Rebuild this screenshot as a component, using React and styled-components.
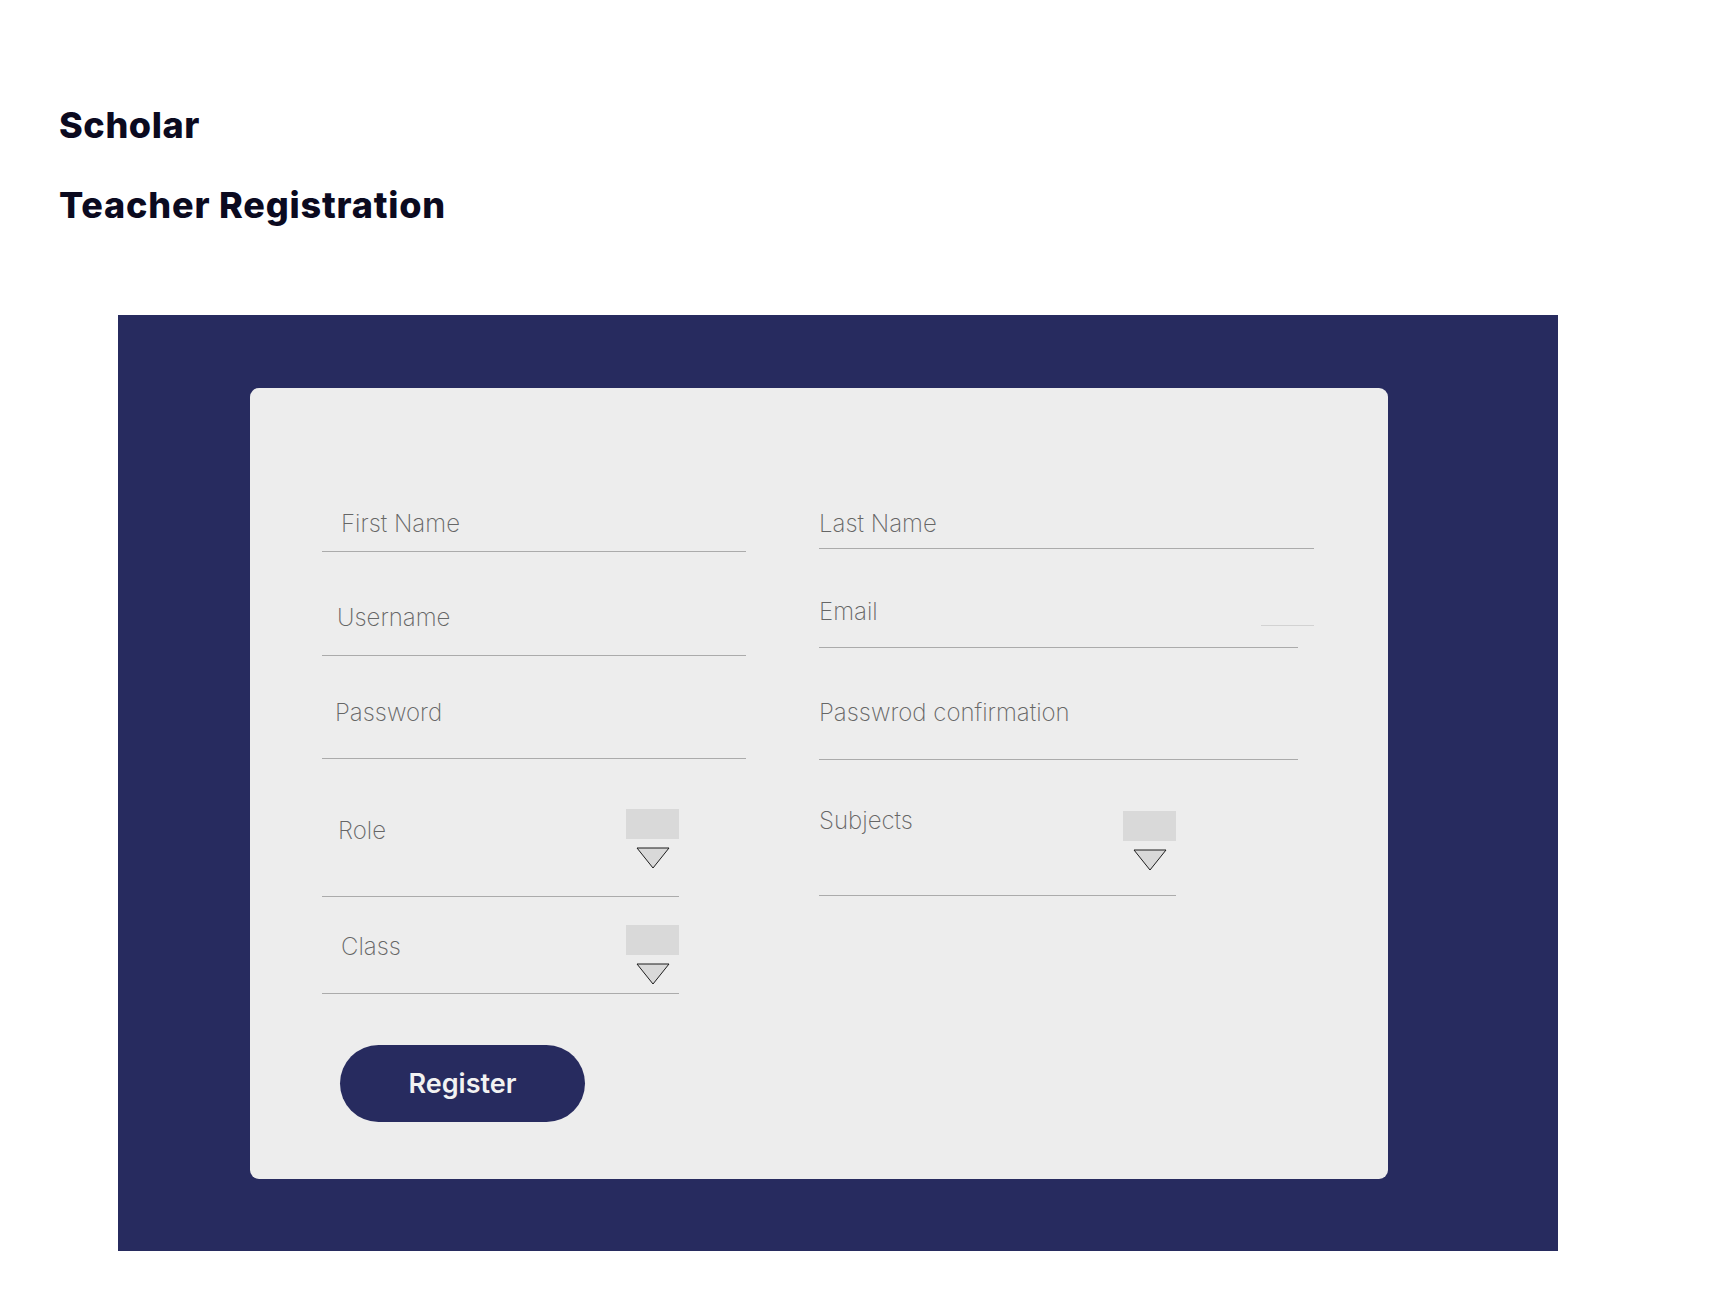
import React from "react";
import styled, { createGlobalStyle } from "styled-components";

const GlobalStyle = createGlobalStyle`
  html, body {
    margin: 0;
    background: #ffffff;
  }
  * {
    box-sizing: border-box;
  }
`;

function Arrow() {
  return (
    <svg width="34" height="22" viewBox="0 0 34 22">
      <polygon
        points="1,1 33,1 17,21"
        fill="#d9d9d9"
        stroke="#1d1d1d"
        strokeWidth="1"
        strokeLinejoin="miter"
      />
    </svg>
  );
}

function Dropdown({ label, width, height, pad, indent, boxTop }) {
  return (
    <SelectField width={width} height={height}>
      <Label pad={pad} indent={indent}>{label}</Label>
      <Picker top={boxTop}>
        <PickBox />
        <Arrow />
      </Picker>
    </SelectField>
  );
}

function App() {
  return (
    <>
      <GlobalStyle />
      <Page>
        <Header>
          <Brand>Scholar</Brand>
          <Title>Teacher Registration</Title>
        </Header>
        <Panel>
          <Card>
            <Columns>
              <Column>
                <Field width={424} height={72}>
                  <Label pad={29} indent={19}>First Name</Label>
                </Field>
                <Field width={424} height={104}>
                  <Label pad={51} indent={15}>Username</Label>
                </Field>
                <Field width={424} height={103}>
                  <Label pad={42} indent={13}>Password</Label>
                </Field>
                <Dropdown label="Role" width={357} height={138} pad={57} indent={16} boxTop={50} />
                <Dropdown label="Class" width={357} height={97} pad={35} indent={19} boxTop={28} />
                <Register>Register</Register>
              </Column>
              <Column>
                <Field width={495} height={69}>
                  <Label pad={29} indent={0}>Last Name</Label>
                </Field>
                <Field width={479} height={99}>
                  <LabelRow pad={48}>
                    <Label pad={0} indent={0}>Email</Label>
                    <Stray />
                  </LabelRow>
                </Field>
                <Field width={479} height={112}>
                  <Label pad={50} indent={0}>Passwrod confirmation</Label>
                </Field>
                <Dropdown label="Subjects" width={357} height={136} pad={46} indent={0} boxTop={51} />
              </Column>
            </Columns>
          </Card>
        </Panel>
      </Page>
    </>
  );
}

const Page = styled.div`
  width: 1728px;
  min-height: 1303px;
  background: #ffffff;
  padding-bottom: 52px;
`;

const Header = styled.header`
  padding: 103px 0 0 59px;
  display: flex;
  flex-direction: column;
  gap: 36px;
  color: #0b0a1f;
  font-family: Inter, "Noto Sans", sans-serif;
`;

const Brand = styled.h1`
  margin: 0;
  font-size: 36px;
  line-height: 44px;
  font-weight: 800;
  letter-spacing: 0.6px;
`;

const Title = styled(Brand)`
  letter-spacing: 0.8px;
`;

const Panel = styled.section`
  margin: 88px 0 0 118px;
  width: 1440px;
  height: 936px;
  background: #272b5f;
  padding: 73px 0 0 132px;
`;

const Card = styled.div`
  width: 1138px;
  height: 791px;
  background: #ededed;
  border-radius: 9px;
  padding: 92px 0 0 72px;
`;

const Columns = styled.div`
  display: flex;
  gap: 73px;
  align-items: flex-start;
`;

const Column = styled.div`
  display: flex;
  flex-direction: column;
`;

const Field = styled.div`
  width: ${(p) => p.width}px;
  height: ${(p) => p.height}px;
  border-bottom: 1px solid #ababab;
`;

const SelectField = styled(Field)`
  display: flex;
  justify-content: space-between;
  align-items: flex-start;
`;

const Label = styled.div`
  padding-top: ${(p) => p.pad}px;
  padding-left: ${(p) => p.indent}px;
  font-family: Inter, "Noto Sans", sans-serif;
  font-weight: 200;
  font-size: 24px;
  line-height: 29px;
  color: #666666;
`;

const LabelRow = styled.div`
  padding-top: ${(p) => p.pad}px;
  display: flex;
  justify-content: space-between;
  align-items: flex-end;
`;

const Stray = styled.span`
  width: 53px;
  height: 1px;
  margin-right: -16px;
  background: #d2d2d2;
`;

const Picker = styled.div`
  margin-top: ${(p) => p.top}px;
  display: flex;
  flex-direction: column;
  align-items: center;
  gap: 8px;
`;

const PickBox = styled.div`
  width: 53px;
  height: 30px;
  background: #d9d9d9;
`;

const Register = styled.button`
  margin: 51px 0 0 18px;
  width: 245px;
  height: 77px;
  border: none;
  border-radius: 39px;
  background: #272b5f;
  color: #f2f2f2;
  font-family: Inter, "Noto Sans", sans-serif;
  font-size: 27px;
  font-weight: 600;
  cursor: pointer;
`;

export default App;
